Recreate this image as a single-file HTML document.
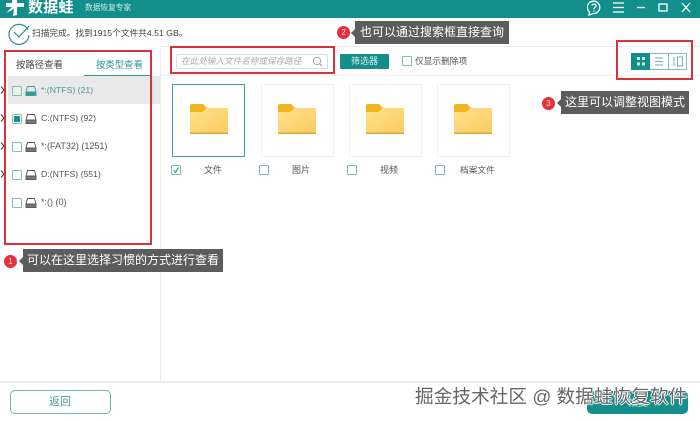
<!DOCTYPE html>
<html lang="zh"><head><meta charset="utf-8">
<style>
html,body{margin:0;padding:0;background:#fff}
#p{position:relative;width:700px;height:421px;overflow:hidden;background:#fff;font-family:"Liberation Sans","Noto Sans CJK SC",sans-serif;color:#555;filter:blur(.3px)}
#p div,#p svg{position:absolute;box-sizing:border-box}
.t{white-space:nowrap;line-height:1}
.r{border:2px solid #d8333b}
.cb{width:10px;height:10px;border:1px solid #7fbfb8;background:#fff;border-radius:1px}
.card{top:84px;width:73px;height:73px;border:1px solid #f0f0f0;background:#fff}
.lab{background:#5c5c5c;color:#fff;font-size:12px;line-height:23px;height:23px;text-align:center;white-space:nowrap}
.lab:before{content:"";position:absolute;left:-4px;top:8px;border:4px solid transparent;border-left:0;border-right-color:#5c5c5c}
.num{width:13px;height:13px;border-radius:50%;background:#e6303c;color:#fbdcdc;font-size:8px;line-height:13px;text-align:center}
</style></head><body><div id="p">
<div style="left:0;top:0;width:700px;height:18px;background:#128f8a"></div>
<svg style="left:5px;top:0" width="20" height="16" viewBox="0 0 20 16"><path d="M7 0H12V3H19V7H12V15L8 16 9 9 1 13 7 7H1V3H7Z" fill="#fff"/></svg>
<div class="t" style="left:28px;top:0;font-size:15px;font-weight:bold;color:#fff;letter-spacing:.2px">数据蛙</div>
<div class="t" style="left:85px;top:4px;font-size:7.7px;color:#d5eeeb">数据恢复专家</div>
<svg style="left:587px;top:0" width="113" height="18" viewBox="0 0 113 18" fill="none" stroke="#fff" stroke-width="1.3"><path d="M6 13.5A6.2 6.2 0 1 0 2.5 12L2 15Z"/><path d="M5 5.5C5 3.6 9 3.6 9 5.7 9 7.2 7 7.2 7 9M7 10.3V11.5"/><path d="M26 3H37M26 7.5H37M26 12H37"/><path d="M50 7.5H58"/><rect x="72" y="4" width="8" height="7"/><path d="M95 3L103 12M103 3L95 12"/></svg>

<svg style="left:8px;top:22px" width="24" height="23" viewBox="0 0 24 23" fill="none" stroke="#2b8f88" stroke-width="1.2"><path d="M20 8A10 10 0 1 0 21 13"/><path d="M6 10L11 15 21 4"/></svg>
<div class="t" style="left:32px;top:29px;font-size:8.7px;color:#444">扫描完成。找到1915个文件共4.51 GB。</div>

<div style="left:160px;top:46px;width:540px;height:1px;background:#efefef"></div>
<div style="left:160px;top:75px;width:540px;height:1px;background:#efefef"></div>
<div style="left:160px;top:46px;width:1px;height:336px;background:#ececec"></div>
<div style="left:0;top:381px;width:700px;height:1.5px;background:#ececec"></div>

<div class="t" style="left:16px;top:60px;font-size:9.4px;color:#444">按路径查看</div>
<div class="t" style="left:96px;top:60px;font-size:9.4px;color:#2b9a93">按类型查看</div>
<div style="left:84px;top:75px;width:68px;height:1px;background:#2b9a93"></div>
<div style="left:8px;top:76px;width:152px;height:28px;background:#e9e9e9"></div>

<svg style="left:0;top:86px" width="6" height="100" viewBox="0 0 6 100" fill="none" stroke="#333" stroke-width="1"><path d="M1 0.500L4 4 1 7.500"/><path d="M1 28.500L4 32 1 35.500"/><path d="M1 56.500L4 60 1 63.500"/><path d="M1 84.500L4 88 1 91.500"/></svg>

<div class="cb" style="left:12px;top:86px;background:#eee"></div>
<div class="cb" style="left:12px;top:114px"></div><div style="left:14px;top:116px;width:6px;height:6px;background:#1d8f88"></div>
<div class="cb" style="left:12px;top:142px"></div>
<div class="cb" style="left:12px;top:170px"></div>
<div class="cb" style="left:12px;top:198px"></div>

<svg style="left:25px;top:85px" width="12" height="12" viewBox="0 0 12 12" fill="none" stroke="#4a9a94" stroke-width=".9"><path d="M2.500 1.500H9.500L11 7H1Z"/><rect x="1" y="7" width="10" height="3.500" fill="#2b9a93"/></svg>
<svg style="left:25px;top:113px" width="12" height="12" viewBox="0 0 12 12" fill="none" stroke="#555" stroke-width=".9"><path d="M2.500 1.500H9.500L11 7H1Z"/><rect x="1" y="7" width="10" height="3.500" fill="#777"/></svg>
<svg style="left:25px;top:141px" width="12" height="12" viewBox="0 0 12 12" fill="none" stroke="#555" stroke-width=".9"><path d="M2.500 1.500H9.500L11 7H1Z"/><rect x="1" y="7" width="10" height="3.500" fill="#777"/></svg>
<svg style="left:25px;top:169px" width="12" height="12" viewBox="0 0 12 12" fill="none" stroke="#555" stroke-width=".9"><path d="M2.500 1.500H9.500L11 7H1Z"/><rect x="1" y="7" width="10" height="3.500" fill="#777"/></svg>
<svg style="left:25px;top:197px" width="12" height="12" viewBox="0 0 12 12" fill="none" stroke="#555" stroke-width=".9"><path d="M2.500 1.500H9.500L11 7H1Z"/><rect x="1" y="7" width="10" height="3.500" fill="#777"/></svg>

<div class="t" style="left:41px;top:86px;font-size:8.700px;color:#4a9a94">*:(NTFS) (21)</div>
<div class="t" style="left:41px;top:114px;font-size:8.700px">C:(NTFS) (92)</div>
<div class="t" style="left:41px;top:142px;font-size:9px">*:(FAT32) (1251)</div>
<div class="t" style="left:41px;top:170px;font-size:8.700px">D:(NTFS) (551)</div>
<div class="t" style="left:41px;top:198px;font-size:9px">*:() (0)</div>

<div class="r" style="left:4px;top:50px;width:148px;height:195px"></div>
<div class="num" style="left:4px;top:255px">1</div>
<div class="lab" style="left:23px;top:249px;width:200px">可以在这里选择习惯的方式进行查看</div>

<div style="left:176px;top:54px;width:152px;height:15px;border:1px solid #ddd;border-radius:2px"></div>
<div class="t" style="left:181px;top:57px;font-size:8.600px;font-style:italic;color:#aaa">在此处输入文件名称或保存路径</div>
<svg style="left:312px;top:56px" width="11" height="11" viewBox="0 0 11 11" fill="none" stroke="#999" stroke-width=".9"><circle cx="5" cy="5" r="3.700"/><path d="M7.700 7.700L10 10"/></svg>
<div class="r" style="left:170px;top:46px;width:165px;height:28px"></div>
<div style="left:340px;top:54px;width:49px;height:15px;background:#128f8a;border-radius:1px"></div>
<div class="t" style="left:351px;top:57px;font-size:9px;color:#cfecea">筛选器</div>
<div class="cb" style="left:402px;top:56px"></div>
<div class="t" style="left:415px;top:57px;font-size:8.700px;color:#555">仅显示删除项</div>
<div class="num" style="left:337px;top:26px">2</div>
<div class="lab" style="left:355px;top:21px;width:154px">也可以通过搜索框直接查询</div>

<div class="r" style="left:616px;top:40px;width:77px;height:40px"></div>
<div style="left:631px;top:53px;width:56px;height:17px;border:1px solid #7fbfb8;background:#fff"></div>
<div style="left:631px;top:53px;width:19px;height:17px;background:#128f8a"></div>
<div style="left:668px;top:53px;width:1px;height:17px;background:#7fbfb8"></div>
<svg style="left:631px;top:53px" width="56" height="17" viewBox="0 0 56 17" fill="none"><g fill="#cfecea"><rect x="6" y="4" width="3" height="3"/><rect x="11" y="4" width="3" height="3"/><rect x="6" y="9.500" width="3" height="3"/><rect x="11" y="9.500" width="3" height="3"/></g><path d="M24 5H32M24 8.500H32M24 12H32" stroke="#6fb3ad"/><path d="M43 4V13M46.500 4H51.500V13H46.500Z" stroke="#6fb3ad"/></svg>
<div class="num" style="left:542px;top:97px">3</div>
<div class="lab" style="left:561px;top:91px;width:128px">这里可以调整视图模式</div>

<div class="card" style="left:172px;border:1.500px solid #3fa39b"></div>
<div class="card" style="left:261px"></div>
<div class="card" style="left:349px"></div>
<div class="card" style="left:437px"></div>
<svg width="0" height="0" style="left:0;top:0"><defs><linearGradient id="g" x1="0" y1="0" x2="1" y2="1"><stop offset="0" stop-color="#fde28c"/><stop offset="1" stop-color="#fbcb5f"/></linearGradient></defs></svg>
<svg style="left:189px;top:103px" width="40" height="32" viewBox="0 0 40 32"><path d="M1 3Q1 1 3 1H14L18 5 17 9H1Z" fill="#f0b31e"/><path d="M1 9H13L18 5H39V30H1Z" fill="url(#g)"/><rect x="1" y="29.500" width="38" height="1.500" fill="#e0a63a"/></svg>
<svg style="left:277px;top:103px" width="40" height="32" viewBox="0 0 40 32"><path d="M1 3Q1 1 3 1H14L18 5 17 9H1Z" fill="#f0b31e"/><path d="M1 9H13L18 5H39V30H1Z" fill="url(#g)"/><rect x="1" y="29.500" width="38" height="1.500" fill="#e0a63a"/></svg>
<svg style="left:365px;top:103px" width="40" height="32" viewBox="0 0 40 32"><path d="M1 3Q1 1 3 1H14L18 5 17 9H1Z" fill="#f0b31e"/><path d="M1 9H13L18 5H39V30H1Z" fill="url(#g)"/><rect x="1" y="29.500" width="38" height="1.500" fill="#e0a63a"/></svg>
<svg style="left:453px;top:103px" width="40" height="32" viewBox="0 0 40 32"><path d="M1 3Q1 1 3 1H14L18 5 17 9H1Z" fill="#f0b31e"/><path d="M1 9H13L18 5H39V30H1Z" fill="url(#g)"/><rect x="1" y="29.500" width="38" height="1.500" fill="#e0a63a"/></svg>

<div class="cb" style="left:171px;top:165px"></div>
<svg style="left:171px;top:165px" width="10" height="10" viewBox="0 0 10 10" fill="none" stroke="#1d8f88" stroke-width="1"><path d="M2.500 5L4.500 7.500 7.500 2.500"/></svg>
<div class="cb" style="left:259px;top:165px"></div>
<div class="cb" style="left:347px;top:165px"></div>
<div class="cb" style="left:435px;top:165px"></div>
<div class="t" style="left:204px;top:166px;font-size:9px">文件</div>
<div class="t" style="left:292px;top:166px;font-size:9px">图片</div>
<div class="t" style="left:380px;top:166px;font-size:9px">视频</div>
<div class="t" style="left:460px;top:166px;font-size:8.700px">档案文件</div>

<div style="left:10px;top:390px;width:101px;height:24px;border:1px solid #6fb3ad;border-radius:5px;background:#fff"></div>
<div class="t" style="left:49px;top:397px;font-size:11px;color:#4d9c96">返回</div>
<div style="left:587px;top:391px;width:101px;height:23px;background:#128f8a;border-radius:5px"></div>
<div class="t" style="left:628px;top:399px;font-size:10px;color:#d8f0ee">恢复</div>
<div class="t" style="left:415px;top:388px;font-size:18.700px;color:#666;text-shadow:-1px 0 #fff,1px 0 #fff,0 -1px #fff,0 1px #fff">掘金技术社区 @ 数据蛙恢复软件</div>
</div></body></html>
